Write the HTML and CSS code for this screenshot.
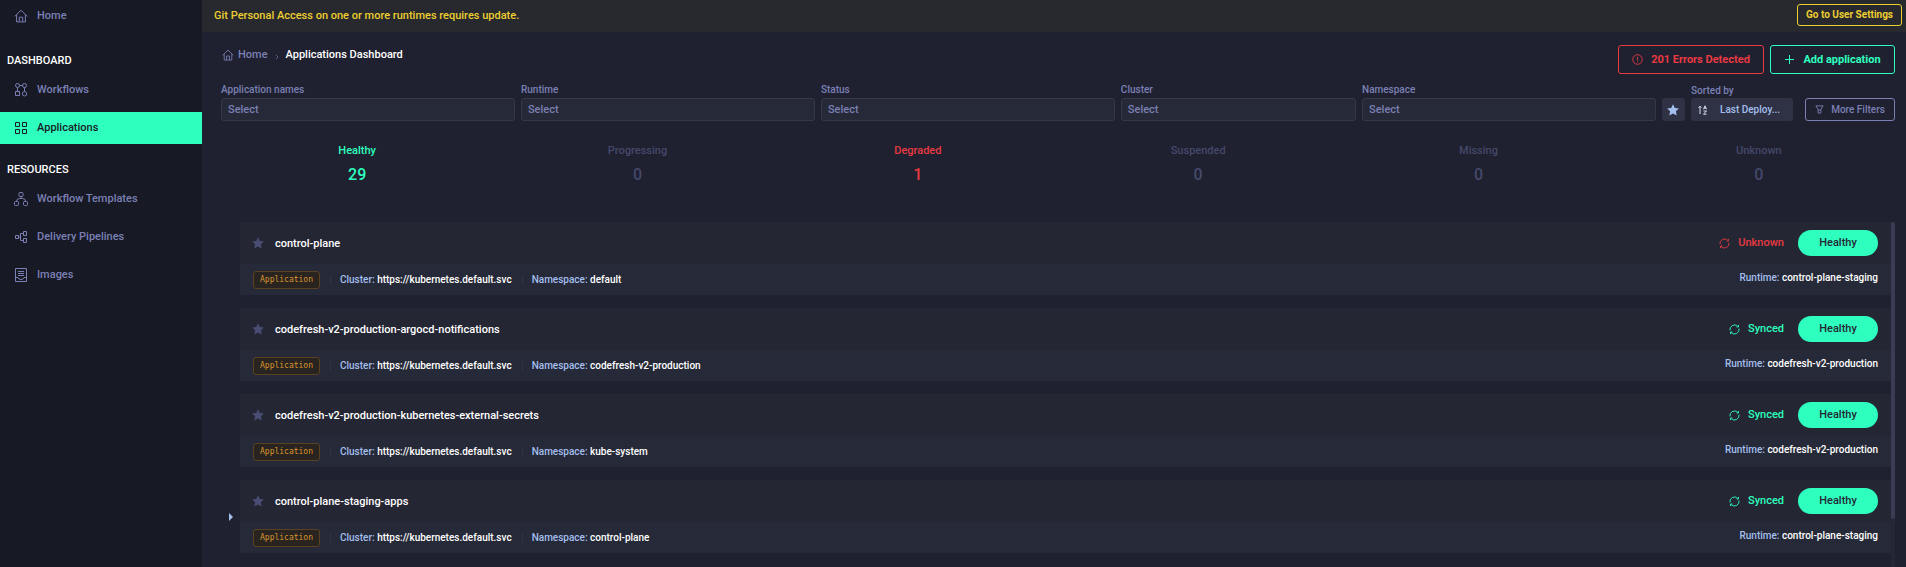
FILE: index.html
```
<!DOCTYPE html>
<html lang="en">
<head>
<meta charset="utf-8">
<title>Applications Dashboard</title>
<link rel="stylesheet" href="styles.css">
</head>
<body>
<svg class="defs" aria-hidden="true">
  <symbol id="home" viewBox="0 0 14 14"><path d="M.8 7.4 7 1.2l6.2 6.2M2.6 6v6.900h8.800V6M5.300 12.700V8.200h3.400v4.500"/></symbol>
  <symbol id="star" viewBox="0 0 12 12"><path d="M6 .2l1.800 3.800 4.100.500-3 2.800.800 4.200L6 9.500l-3.700 2 .800-4.200-3-2.800 4.100-.500z"/></symbol>
  <symbol id="sync" viewBox="0 0 12 12"><path d="M1.100 7A5 5 0 0 1 9.500 2.500M10.900 5A5 5 0 0 1 2.500 9.500M10.300 1v2.300H8.300M1.700 11V8.700h2"/></symbol>
</svg>
<div class="app">
  <nav class="sidebar">
    <a class="nav-item nav-home" href="#"><svg class="icon"><use href="#home"/></svg>Home</a>
    <h2 class="nav-title">DASHBOARD</h2>
    <a class="nav-item" href="#"><svg class="icon" viewBox="0 0 14 14"><circle cx="3.500" cy="2.500" r="2"/><circle cx="10.500" cy="2.500" r="2"/><path d="M1.500 8.500h4v4h-4zM3.500 4.500v4M5.500 2.500h3M10.500 4.500v4"/><circle cx="10.500" cy="10.800" r="2.200"/></svg>Workflows</a>
    <a class="nav-item active" href="#"><svg class="icon" viewBox="0 0 14 14"><path d="M1.500 1.500h4v4h-4zM8.500 1.500h4v4h-4zM1.500 8.500h4v4h-4zM8.500 8.500h4v4h-4z"/></svg>Applications</a>
    <h2 class="nav-title">RESOURCES</h2>
    <a class="nav-item" href="#"><svg class="icon" viewBox="0 0 14 14"><rect x="5" y=".5" width="4" height="4" rx="1"/><rect x=".5" y="9.500" width="4" height="4" rx="1"/><rect x="9.500" y="9.500" width="4" height="4" rx="1"/><path d="M7 4.500v2M2.500 9.500Q2.500 6.500 5.500 6.500h3q3 0 3 3"/></svg>Workflow Templates</a>
    <a class="nav-item" href="#"><svg class="icon" viewBox="0 0 14 14"><path d="M1.500 5.500h3v3h-3zM9.500 1.500h3v4h-3zM9.500 8.500h3v4h-3zM4.500 7h2M9.500 3.500h-3v7h3"/></svg>Delivery Pipelines</a>
    <a class="nav-item" href="#"><svg class="icon" viewBox="0 0 14 14"><path d="M1.500 .5h11v13h-11zM4 3.500h6M4 5.500h6M4 7.500h6M1.500 9.500H4q.5 2 3 2t3-2h2.500"/></svg>Images</a>
  </nav>
  <main class="main">
    <div class="banner"><span>Git Personal Access on one or more runtimes requires update.</span><button class="btn btn-yellow">Go to User Settings</button></div>
    <header class="head">
      <div class="crumbs"><a href="#"><svg class="icon icon-sm"><use href="#home"/></svg>Home</a><svg class="chev" viewBox="0 0 4 6"><path d="M.8.8 3 3 .8 5.200"/></svg><h1>Applications Dashboard</h1></div>
      <div class="actions">
        <button class="btn btn-red"><svg class="icon icon-xs" viewBox="0 0 12 12"><circle cx="6" cy="6" r="5.200"/><path d="M6 3v4M6 8.200v1"/></svg>201 Errors Detected</button>
        <button class="btn btn-green"><svg class="icon icon-xs" viewBox="0 0 11 11"><path d="M5.500 1v9M1 5.500h9"/></svg>Add application</button>
      </div>
    </header>
    <section class="filters">
      <div class="field"><label for="f1">Application names</label><select id="f1"><option>Select</option></select></div>
      <div class="field"><label for="f2">Runtime</label><select id="f2"><option>Select</option></select></div>
      <div class="field"><label for="f3">Status</label><select id="f3"><option>Select</option></select></div>
      <div class="field field-narrow"><label for="f4">Cluster</label><select id="f4"><option>Select</option></select></div>
      <div class="field"><label for="f5">Namespace</label><select id="f5"><option>Select</option></select></div>
      <button class="fav" aria-label="Favorites"><svg class="star"><use href="#star"/></svg></button>
      <div class="sort"><span>Sorted by</span><button><svg class="sort-icon" viewBox="0 0 10 10"><path d="M2 9V1.500M.6 2.800 2 1.200l1.400 1.600M5.500 4.300 7 .8l1.500 3.500M6 3.200h2M5.500 6h3L5.500 9.200h3"/></svg>Last Deploy...</button></div>
      <button class="btn btn-more"><svg class="icon funnel" viewBox="0 0 10 10"><path d="M1 1h8L6.500 5v4h-3V5zM3.500 5.500h3"/></svg>More Filters</button>
    </section>
    <section class="stats">
      <div class="stat good"><span>Healthy</span><strong>29</strong></div>
      <div class="stat"><span>Progressing</span><strong>0</strong></div>
      <div class="stat bad"><span>Degraded</span><strong>1</strong></div>
      <div class="stat"><span>Suspended</span><strong>0</strong></div>
      <div class="stat"><span>Missing</span><strong>0</strong></div>
      <div class="stat"><span>Unknown</span><strong>0</strong></div>
    </section>
    <section class="list">
      <div class="rows">
        <article class="card">
          <div class="top"><svg class="star"><use href="#star"/></svg><h3>control-plane</h3><span class="sync bad"><svg class="icon icon-xs"><use href="#sync"/></svg>Unknown</span><span class="pill">Healthy</span></div>
          <div class="meta"><span class="tag">Application</span><span class="info">Cluster: <b>https://kubernetes.default.svc</b></span><span class="info">Namespace: <b>default</b></span><span class="runtime">Runtime: <b>control-plane-staging</b></span></div>
        </article>
        <article class="card">
          <div class="top"><svg class="star"><use href="#star"/></svg><h3>codefresh-v2-production-argocd-notifications</h3><span class="sync good"><svg class="icon icon-xs"><use href="#sync"/></svg>Synced</span><span class="pill">Healthy</span></div>
          <div class="meta"><span class="tag">Application</span><span class="info">Cluster: <b>https://kubernetes.default.svc</b></span><span class="info">Namespace: <b>codefresh-v2-production</b></span><span class="runtime">Runtime: <b>codefresh-v2-production</b></span></div>
        </article>
        <article class="card">
          <div class="top"><svg class="star"><use href="#star"/></svg><h3>codefresh-v2-production-kubernetes-external-secrets</h3><span class="sync good"><svg class="icon icon-xs"><use href="#sync"/></svg>Synced</span><span class="pill">Healthy</span></div>
          <div class="meta"><span class="tag">Application</span><span class="info">Cluster: <b>https://kubernetes.default.svc</b></span><span class="info">Namespace: <b>kube-system</b></span><span class="runtime">Runtime: <b>codefresh-v2-production</b></span></div>
        </article>
        <article class="card">
          <button class="expand" aria-label="Expand"></button>
          <div class="top"><svg class="star"><use href="#star"/></svg><h3>control-plane-staging-apps</h3><span class="sync good"><svg class="icon icon-xs"><use href="#sync"/></svg>Synced</span><span class="pill">Healthy</span></div>
          <div class="meta"><span class="tag">Application</span><span class="info">Cluster: <b>https://kubernetes.default.svc</b></span><span class="info">Namespace: <b>control-plane</b></span><span class="runtime">Runtime: <b>control-plane-staging</b></span></div>
        </article>
      </div>
      <div class="scroll"><div class="thumb"></div></div>
    </section>
  </main>
</div>
</body>
</html>
```
FILE: styles.css
```
* { box-sizing: border-box; }
body { margin: 0; background: #1f2130; color: #fff; font: 500 11px/14px Roboto, "Liberation Sans", sans-serif; overflow: hidden; }
h1, h2, h3 { margin: 0; font: inherit; }
a { color: inherit; text-decoration: none; }
button, select { font: inherit; color: inherit; margin: 0; padding: 0; border: 0; background: none; }
b { font-weight: 500; color: #fff; }
.defs { position: absolute; width: 0; height: 0; }
.app { display: flex; min-height: 100vh; }
.icon { width: 14px; height: 14px; flex: none; fill: none; stroke: currentColor; stroke-width: 1; }
.icon-sm { width: 12px; height: 12px; }
.icon-xs { width: 11px; height: 11px; }

.sidebar { width: 202px; flex: none; background: #171925; color: #7b80b4; display: flex; flex-direction: column; gap: 6px; }
.nav-item { display: flex; align-items: center; gap: 9px; height: 32px; padding-left: 14px; }
.nav-home { margin-bottom: 3px; }
.nav-title { color: #fff; padding: 0 7px; margin-top: 13px; }
.active { background: #2effbf; color: #171925; }

.main { flex: 1; min-width: 0; height: 100vh; display: flex; flex-direction: column; }
.banner { display: flex; align-items: center; justify-content: space-between; height: 32px; padding: 0 4px 2px 12px; background: #28292e; color: #edcf30; }
.banner span { padding-top: 2px; }
.btn { display: flex; align-items: center; justify-content: center; gap: 8px; border: 1px solid; border-radius: 3px; font-weight: 700; }
.btn-yellow { width: 105px; height: 22px; font-size: 10px; }
.head { display: flex; justify-content: space-between; padding: 13px 11px 0 20px; }
.crumbs, .crumbs a { display: flex; align-items: center; gap: 4px; }
.crumbs { height: 20px; gap: 7px; }
.crumbs a { color: #7b80b4; }
.chev { width: 4px; height: 6px; fill: none; stroke: #5a5e88; margin-top: 3px; }
.actions { display: flex; gap: 6px; }
.btn-red, .btn-green { height: 29px; font-size: 11px; }
.btn-red { width: 146px; color: #e93a42; }
.btn-green { width: 125px; color: #2effbf; }

.filters { display: flex; align-items: flex-end; gap: 6px; padding: 8px 11px 0 19px; color: #7b80b4; font-size: 10px; }
.field { flex: 5; min-width: 0; display: flex; flex-direction: column; }
.field-narrow { flex: 4; }
.field label { line-height: 16px; }
.field select { appearance: none; height: 23px; width: 100%; padding: 0 6px; border: 1px solid #353848; border-radius: 3px; background: #262937; font-size: 11px; }
.fav { width: 23px; height: 23px; border-radius: 3px; background: #2f3244; color: #a3bfee; display: flex; align-items: center; justify-content: center; }
.star { width: 12px; height: 12px; fill: currentColor; flex: none; }
.sort { display: flex; flex-direction: column; }
.sort button { display: flex; align-items: center; gap: 12px; width: 102px; height: 23px; padding-left: 7px; border-radius: 3px; background: #2f3244; color: #a3bfee; }
.sort-icon { width: 10px; height: 10px; fill: none; stroke: #d7dcea; }
.btn-more { width: 90px; height: 23px; margin-left: 6px; gap: 7px; font-size: 10px; font-weight: 500; }
.funnel { width: 9px; height: 9px; }

.stats { display: grid; grid-template-columns: repeat(6, 1fr); padding: 23px 7px 0 15px; color: #45486a; text-align: center; }
.stat { display: flex; flex-direction: column; }
.stat strong { font-size: 16px; line-height: 20px; font-weight: 500; margin-top: 7px; }
.good { color: #2effbf; }
.bad { color: #e93a42; }

.list { flex: 1; min-height: 0; display: flex; margin-top: 37px; padding: 0 11px 0 38px; }
.rows { flex: 1; display: flex; flex-direction: column; gap: 13px; }
.card { position: relative; background: #262937; }
.top, .meta { display: flex; align-items: center; padding: 0 13px; }
.top { height: 42px; padding-left: 12px; background: #242634; }
.top h3 { padding-top: 2px; }
.top .star { color: #4a4d73; margin-right: 11px; }
.sync { display: flex; align-items: center; gap: 8px; margin-left: auto; }
.pill { width: 80px; height: 26px; margin-left: 14px; border-radius: 13px; background: #2effbf; color: #242634; line-height: 26px; text-align: center; }
.meta { height: 31px; color: #a3bfee; font-size: 10px; }
.tag { height: 18px; padding: 0 6px; border: 1px solid #5a411f; border-radius: 3px; background: #29241f; color: #d9952f; font: 8px/16px "DejaVu Sans Mono", monospace; }
.info { margin-left: 10px; padding-left: 9px; border-left: 1px solid #303343; line-height: 10px; }
.runtime { margin-left: auto; padding-bottom: 4px; }
.expand { position: absolute; left: -11px; top: 33px; border: solid transparent; border-width: 4px 0 4px 4px; border-left-color: #a3bfee; }
.scroll { width: 4px; flex: none; background: #242634; }
.thumb { height: 86%; border-radius: 2px; background: #3b3c54; }
```
